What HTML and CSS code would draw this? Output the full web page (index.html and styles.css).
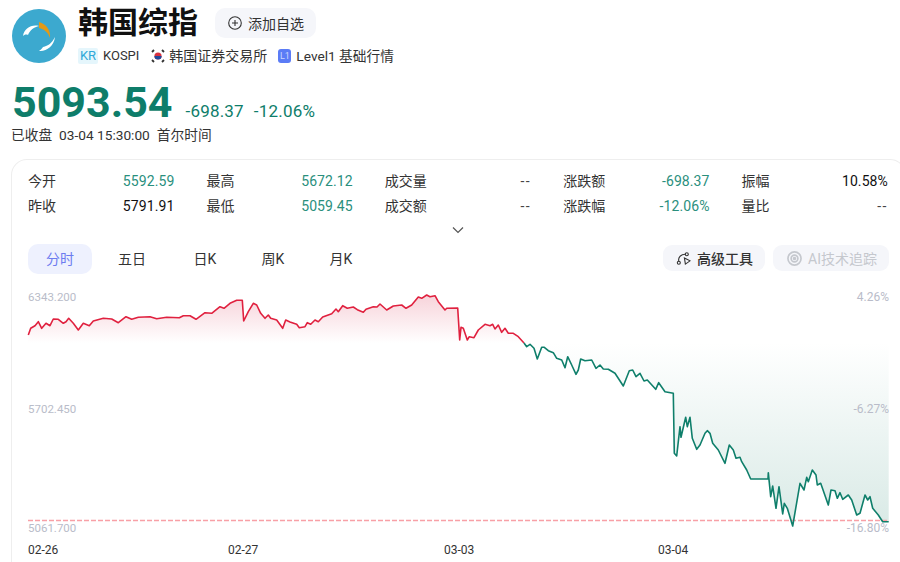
FILE: index.html
```html
<!DOCTYPE html>
<html lang="zh">
<head>
<meta charset="utf-8">
<title>韩国综指</title>
<link rel="stylesheet" href="styles.css">
</head>
<body>
<div class="hd">
	<svg class="logo" viewBox="0 0 54 54">
		<circle cx="27" cy="27" r="27" fill="#3ca9cf"/>
		<path d="M11 27C12 20 19 15 27 17C22 18 18 21 16 26C14 25 12 26 11 27Z" fill="#fff"/>
		<path d="M27 13L27 19C32 20 36 23 38 29C39 21 34 15 27 13Z" fill="#e39a16"/>
		<path d="M27 42C34 43 42 37 43 28C40 34 36 37 31 38C30 40 28 41 27 42Z" fill="#fff"/>
	</svg>
	<div class="hd-info">
		<div class="hd-title">
			<h1>韩国综指</h1>
			<div class="add-btn">
				<svg class="add-icon" viewBox="0 0 14 14"><circle cx="7" cy="7" r="6.3"/><path d="M4 7H10M7 4V10"/></svg>
				添加自选
			</div>
		</div>
		<div class="hd-tags">
			<span class="tag-kr">KR</span>
			<span class="tag-code">KOSPI</span>
			<svg class="flag" viewBox="0 0 14 14">
				<circle cx="7" cy="7" r="3.6" fill="#d9303f"/>
				<path d="M3.4 7A3.6 3.6 0 0 0 10.6 7Z" fill="#1f4a9c"/>
				<path d="M1 3L3 1M11 1L13 3M1 11L3 13M11 13L13 11" stroke="#333" stroke-width="1.8"/>
			</svg>
			<span class="tag-ex">韩国证券交易所</span>
			<span class="tag-l1">L1</span>
			<span class="tag-level">Level1 基础行情</span>
		</div>
	</div>
</div>

<div class="price">
	<span class="price-now">5093.54</span>
	<span class="price-chg">-698.37</span>
	<span class="price-chg">-12.06%</span>
</div>
<div class="status">
	<span>已收盘</span><span>03-04 15:30:00</span><span>首尔时间</span>
</div>

<div class="card">
	<div class="stats">
		<div class="stat"><span>今开</span><b class="down">5592.59</b></div>
		<div class="stat"><span>最高</span><b class="down">5672.12</b></div>
		<div class="stat"><span>成交量</span><b>--</b></div>
		<div class="stat"><span>涨跌额</span><b class="down">-698.37</b></div>
		<div class="stat"><span>振幅</span><b class="dark">10.58%</b></div>
		<div class="stat"><span>昨收</span><b class="dark">5791.91</b></div>
		<div class="stat"><span>最低</span><b class="down">5059.45</b></div>
		<div class="stat"><span>成交额</span><b>--</b></div>
		<div class="stat"><span>涨跌幅</span><b class="down">-12.06%</b></div>
		<div class="stat"><span>量比</span><b>--</b></div>
	</div>
	<svg class="chevron" viewBox="0 0 12 8"><path d="M1 1.5L6 6.5L11 1.5"/></svg>
	<div class="toolbar">
		<div class="tabs">
			<div class="tab on">分时</div>
			<div class="tab">五日</div>
			<div class="tab">日K</div>
			<div class="tab">周K</div>
			<div class="tab">月K</div>
		</div>
		<div class="tools">
			<div class="tool">
				<svg class="tool-icon" viewBox="0 0 16 14"><circle cx="3" cy="11.5" r="1.6"/><circle cx="11.5" cy="2.5" r="1.6"/><path d="M3 10C2 6 5 2.5 10 2.5M9 6.5L15 9.5L10 13Z"/></svg>
				高级工具
			</div>
			<div class="tool off">
				<svg class="tool-icon" viewBox="0 0 16 16"><circle cx="8" cy="8" r="7"/><circle cx="8" cy="8" r="3.6"/><circle cx="8" cy="8" r="1" fill="#c5c8ce"/></svg>
				AI技术追踪
			</div>
		</div>
	</div>
	<svg class="chart" viewBox="12 285 889 277">
		<defs>
			<linearGradient id="redfade" x1="0" y1="0" x2="0" y2="1"><stop offset="0" stop-color="#f7d3da"/><stop offset="1" stop-color="#fff"/></linearGradient>
			<linearGradient id="greenfade" x1="0" y1="0" x2="0" y2="1"><stop offset="0" stop-color="#fff"/><stop offset="1" stop-color="#d9eae6"/></linearGradient>
		</defs>
		<polygon fill="url(#redfade)" points="28.3,343 28.3,335 30.7,328.3 35,325.7 38.3,321.7 41.7,328.3 46,323.3 50,325.7 53.3,319 58.3,319.3 63.3,323.3 66,321.7 68.7,318.3 73.3,323.3 78.3,330 83.3,323.3 89.3,325.7 93.3,321 103.3,318.3 111.7,319 118.3,322.7 126,316.7 131.7,319.3 138.3,317.3 150,316.7 156.7,318.7 166.7,317.3 179.3,317.7 183.3,315.7 190,315.7 196,319.3 205,312.7 211.7,313.3 220,306.7 224,308.3 230,303.3 236.7,300.3 242.3,300.3 243.7,321 248.3,311.7 253.3,303.3 256.7,305 260.7,313.3 265,318.3 268.3,315 270.7,318.3 276.7,320 282.7,328.3 285.7,320 290,322 296.7,324.3 299.3,327.7 305,326.7 307.3,322.7 310.7,324.3 315,320 318.3,321.7 322.7,317 331.7,313.7 336,309 338.3,311.7 342.7,305.7 347.3,308.3 353.3,307 357.3,309.7 363.3,312.3 366,309.3 373.3,306.7 377,307 380,304 386.7,310 393.3,306 401.7,305 406,308.3 411.7,305 418.3,297 421.7,298.3 426.7,295 430,296.7 435,295.7 438.3,301.7 445,310 446.7,308.3 457.7,308 459.7,340 461,327.3 463.3,328.3 467.3,340 469.3,336.7 474,337.7 478.3,330 485,324.3 490,325.7 492.7,324.3 495,329 498.3,325 501.7,332.3 505,328.3 508.3,333.3 513.3,333.3 518.3,336.7 524,343"/>
		<polygon fill="url(#greenfade)" points="524,343 526.7,346.7 530,344.3 534,348.3 537.3,359 541.7,347.3 544.3,347.3 548.3,350.7 553.3,352.7 556.7,358.3 561.7,360 565,367.7 567.7,356.7 571.7,365 576,374.3 578.3,370 580.7,359 585,360.7 591.7,360 596,368.3 600,365 603.3,369 608.3,369.3 615,373.3 623.3,386 629.3,370.7 632.7,370 636,376.7 640,373.3 644,381 647.3,380 655.7,389.3 658.7,382.7 665,391.7 673.3,393.3 674.3,453.3 676.7,456 680,426.7 681,437.3 685.7,417.3 687.3,426.7 690,417.3 692.3,438.3 696.7,449.3 700,445 705,433.3 707.3,430.7 710,433.3 712.7,443.3 718.3,450 725,463.3 729.3,445 733.3,450 736,458.3 740,457.3 741.7,461.7 746.7,470 750.7,479 768,479 768.3,472.7 770.7,496.7 772.7,486 776,508.3 779,486.7 782.7,514 784.3,503.3 787.3,508.3 792.7,526 800,483.3 804,490 806.7,477.3 808.3,481.7 812.3,470 816,475 817.3,485 820.7,483.3 828.3,505 831,490 835,490.7 837.3,498.3 840,492.7 842.7,499.3 848.3,495 851.7,500 856.7,515 860,513.3 865,495 867.7,500 870,496.7 872.7,508.3 878.3,515 882.7,521.7 888.7,521.7 888.7,343"/>
		<line class="low-line" x1="28" y1="520.5" x2="889" y2="520.5"/>
		<polyline class="line red" points="28.3,335 30.7,328.3 35,325.7 38.3,321.7 41.7,328.3 46,323.3 50,325.7 53.3,319 58.3,319.3 63.3,323.3 66,321.7 68.7,318.3 73.3,323.3 78.3,330 83.3,323.3 89.3,325.7 93.3,321 103.3,318.3 111.7,319 118.3,322.7 126,316.7 131.7,319.3 138.3,317.3 150,316.7 156.7,318.7 166.7,317.3 179.3,317.7 183.3,315.7 190,315.7 196,319.3 205,312.7 211.7,313.3 220,306.7 224,308.3 230,303.3 236.7,300.3 242.3,300.3 243.7,321 248.3,311.7 253.3,303.3 256.7,305 260.7,313.3 265,318.3 268.3,315 270.7,318.3 276.7,320 282.7,328.3 285.7,320 290,322 296.7,324.3 299.3,327.7 305,326.7 307.3,322.7 310.7,324.3 315,320 318.3,321.7 322.7,317 331.7,313.7 336,309 338.3,311.7 342.7,305.7 347.3,308.3 353.3,307 357.3,309.7 363.3,312.3 366,309.3 373.3,306.7 377,307 380,304 386.7,310 393.3,306 401.7,305 406,308.3 411.7,305 418.3,297 421.7,298.3 426.7,295 430,296.7 435,295.7 438.3,301.7 445,310 446.7,308.3 457.7,308 459.7,340 461,327.3 463.3,328.3 467.3,340 469.3,336.7 474,337.7 478.3,330 485,324.3 490,325.7 492.7,324.3 495,329 498.3,325 501.7,332.3 505,328.3 508.3,333.3 513.3,333.3 518.3,336.7 524,343"/>
		<polyline class="line green" points="524,343 526.7,346.7 530,344.3 534,348.3 537.3,359 541.7,347.3 544.3,347.3 548.3,350.7 553.3,352.7 556.7,358.3 561.7,360 565,367.7 567.7,356.7 571.7,365 576,374.3 578.3,370 580.7,359 585,360.7 591.7,360 596,368.3 600,365 603.3,369 608.3,369.3 615,373.3 623.3,386 629.3,370.7 632.7,370 636,376.7 640,373.3 644,381 647.3,380 655.7,389.3 658.7,382.7 665,391.7 673.3,393.3 674.3,453.3 676.7,456 680,426.7 681,437.3 685.7,417.3 687.3,426.7 690,417.3 692.3,438.3 696.7,449.3 700,445 705,433.3 707.3,430.7 710,433.3 712.7,443.3 718.3,450 725,463.3 729.3,445 733.3,450 736,458.3 740,457.3 741.7,461.7 746.7,470 750.7,479 768,479 768.3,472.7 770.7,496.7 772.7,486 776,508.3 779,486.7 782.7,514 784.3,503.3 787.3,508.3 792.7,526 800,483.3 804,490 806.7,477.3 808.3,481.7 812.3,470 816,475 817.3,485 820.7,483.3 828.3,505 831,490 835,490.7 837.3,498.3 840,492.7 842.7,499.3 848.3,495 851.7,500 856.7,515 860,513.3 865,495 867.7,500 870,496.7 872.7,508.3 878.3,515 882.7,521.7 888.7,521.7"/>
		<text class="axis" x="28" y="301">6343.200</text>
		<text class="axis" x="28" y="413">5702.450</text>
		<text class="axis" x="28" y="532">5061.700</text>
		<text class="axis pct" x="889" y="301">4.26%</text>
		<text class="axis pct" x="889" y="413">-6.27%</text>
		<text class="axis pct" x="889" y="532">-16.80%</text>
		<text class="date" x="28" y="554">02-26</text>
		<text class="date" x="228" y="554">02-27</text>
		<text class="date" x="444" y="554">03-03</text>
		<text class="date" x="658" y="554">03-04</text>
	</svg>
</div>
</body>
</html>
```

FILE: styles.css
```css
html,body{
	margin:0;
	padding:0;
	height:562px;
	overflow:hidden;
	background:#fff;
	font-family:Roboto,"Noto Sans CJK SC",sans-serif;
	color:#333;
}
.hd{
	display:flex;
	gap:12px;
	padding:8px 0 0 12px;
}
.logo{
	width:54px;
	height:54px;
	margin-top:1px;
}
.hd-title{
	display:flex;
	align-items:center;
	gap:17px;
	height:30px;
}
.hd-title h1{
	margin:0;
	font-size:30px;
	line-height:30px;
	font-weight:700;
	color:#111;
}
.add-btn{
	display:flex;
	align-items:center;
	gap:6px;
	height:30px;
	padding:0 12px 0 13px;
	background:#f5f6fa;
	border-radius:10px;
	font-size:14px;
}
.add-icon{
	width:14px;
	height:14px;
	fill:none;
	stroke:#333;
	stroke-width:1.1;
}
.hd-tags{
	display:flex;
	align-items:center;
	height:16px;
	margin-top:10px;
	font-size:14px;
	line-height:16px;
}
.tag-kr{
	width:20px;
	height:16px;
	margin-right:5px;
	background:#e5f6fc;
	border-radius:2px;
	color:#2fa8d8;
	font-size:13px;
	text-align:center;
}
.tag-code{
	font-size:13px;
}
.tag-level{
	font-size:13.7px;
}
.flag{
	width:14px;
	height:14px;
	margin-left:12px;
	margin-right:4px;
}
.tag-l1{
	width:13px;
	height:14px;
	margin:0 5px 0 11px;
	background:#5b7cf6;
	border-radius:3px;
	color:#cdd8fd;
	font-size:9px;
	line-height:14px;
	text-align:center;
}
.price{
	display:flex;
	align-items:baseline;
	gap:10px;
	height:38px;
	margin-top:19px;
	padding-left:12px;
	color:#0e7d6a;
}
.price-now{
	margin-right:3px;
	font-size:43px;
	line-height:38px;
	font-weight:700;
}
.price-chg{
	font-size:17px;
	line-height:20px;
	letter-spacing:.2px;
}
.status{
	display:flex;
	gap:7px;
	height:18px;
	margin-top:5px;
	padding-left:11px;
	font-size:13.7px;
	line-height:18px;
}
.card{
	width:895px;
	height:420px;
	margin:15px 0 0 11px;
	border:1px solid #eee;
	border-bottom:0;
	border-radius:16px 16px 0 0;
	box-sizing:border-box;
}
.stats{
	display:grid;
	grid-template-columns:repeat(5,146.4px);
	column-gap:32px;
	grid-auto-rows:25px;
	padding:9px 0 0 16px;
	font-size:14px;
	line-height:25px;
}
.stat{
	display:flex;
	justify-content:space-between;
}
.stat b{
	font-weight:400;
	color:#444;
	letter-spacing:1.5px;
}
.stat b.down{
	color:#2a8f7d;
	letter-spacing:.1px;
}
.stat b.dark{
	color:#111;
	letter-spacing:.1px;
}
.chevron{
	display:block;
	width:12px;
	height:8px;
	margin:7px 0 0 440px;
	fill:none;
	stroke:#555;
	stroke-width:1.2;
}
.toolbar{
	display:flex;
	justify-content:space-between;
	align-items:center;
	height:30px;
	margin-top:10px;
	padding:0 16px;
}
.tabs{
	display:grid;
	grid-template-columns:64px 64px 66px 54px 66px;
	column-gap:8px;
}
.tab{
	height:30px;
	border-radius:10px;
	font-size:14px;
	line-height:30px;
	text-align:center;
}
.tab.on{
	background:#eef1fe;
	color:#6d7cf0;
}
.tools{
	display:flex;
	gap:8px;
	margin-bottom:2px;
}
.tool{
	display:flex;
	align-items:center;
	gap:6px;
	height:26px;
	padding:0 12px 0 13px;
	background:#f5f6fa;
	border-radius:9px;
	font-size:14px;
	font-weight:500;
}
.tool.off{
	padding-left:14px;
	color:#c5c8ce;
	font-weight:400;
}
.tool-icon{
	width:15px;
	height:15px;
	fill:none;
	stroke:#333;
	stroke-width:1.2;
}
.tool.off .tool-icon{
	stroke:#c5c8ce;
	stroke-width:1.8;
}
.chart{
	display:block;
	width:889px;
	height:277px;
	margin-top:11px;
}
.line{
	fill:none;
	stroke-width:1.6;
	stroke-linejoin:round;
}
.red{
	stroke:#e0213f;
}
.green{
	stroke:#0f7f6b;
}
.low-line{
	stroke:#f8a0a6;
	stroke-width:1.3;
	stroke-dasharray:5 2;
}
.axis{
	font-size:11.5px;
	fill:#b9bcc9;
}
.pct{
	font-size:12px;
	text-anchor:end;
}
.date{
	font-size:12px;
	fill:#333;
}
```
